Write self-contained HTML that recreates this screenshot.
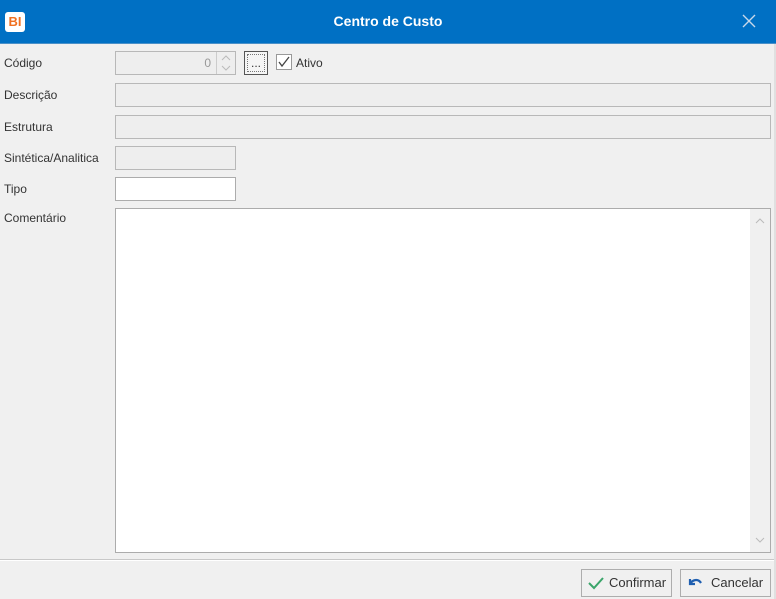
<!DOCTYPE html>
<html><head><meta charset="utf-8"><style>
*{box-sizing:border-box;margin:0;padding:0}
body{width:776px;height:599px;background:#f0f0f0;font-family:"Liberation Sans",sans-serif;font-size:12px;color:#333;position:relative;overflow:hidden}
.title{position:absolute;left:0;top:0;width:776px;height:44px;background:#0070c4;border-bottom:1px solid #4a90c8}
.title .t{position:absolute;left:0;width:776px;top:13px;text-align:center;color:#fff;font-weight:bold;font-size:14px}
.logo{position:absolute;left:5px;top:12px;width:20px;height:20px;background:#fff;border-radius:3px;color:#f07020;font-weight:bold;font-size:13px;text-align:center;line-height:20px}
.x{position:absolute;left:740px;top:12px}
.lbl{position:absolute;left:4px;font-size:12px;color:#333}
.in{position:absolute;border:1px solid #b8b8b8;background:#eeeeee}
.w{background:#fff;border-color:#acacac}
.right{position:absolute;right:0;top:44px;width:2px;height:555px;background:#e0e0e0}
.btn{position:absolute;top:569px;height:28px;border:1px solid #adadad;background:#f0f0f0;font-size:13px;color:#333;line-height:26px}
</style></head><body>
<div class="title"><div class="logo">BI</div><div class="t">Centro de Custo</div>
<svg class="x" width="18" height="18" viewBox="0 0 18 18"><path d="M3 3L15 15M15 3L3 15" stroke="#c8d8ea" stroke-width="1.4"/></svg></div>
<div class="lbl" style="top:56px">Código</div>
<div class="in" style="left:115px;top:51px;width:121px;height:24px"><span style="position:absolute;right:24px;top:4px;color:#999">0</span>
<div style="position:absolute;right:0;top:0;width:19px;height:22px;border-left:1px solid #ccc"><svg width="18" height="22"><path d="M5 8l4-4 4 4M5 14l4 4 4-4" stroke="#bbb" fill="none"/></svg></div></div>
<div style="position:absolute;left:244px;top:51px;width:24px;height:24px;border:1px solid #555;background:#f5f5f5;font-size:12px;text-align:center;line-height:22px"><div style="position:absolute;left:2px;top:2px;right:2px;bottom:2px;border:1px dotted #777"></div>...</div>
<div style="position:absolute;left:276px;top:54px;width:16px;height:16px;border:1px solid #999;background:#fff"><svg width="14" height="14"><path d="M2 7l3 4 7-9" stroke="#444" fill="none" stroke-width="1.3"/></svg></div>
<div class="lbl" style="left:296px;top:56px">Ativo</div>
<div class="lbl" style="top:88px">Descrição</div>
<div class="in" style="left:115px;top:83px;width:656px;height:24px"></div>
<div class="lbl" style="top:120px">Estrutura</div>
<div class="in" style="left:115px;top:115px;width:656px;height:24px"></div>
<div class="lbl" style="top:151px">Sintética/Analitica</div>
<div class="in" style="left:115px;top:146px;width:121px;height:24px"></div>
<div class="lbl" style="top:182px">Tipo</div>
<div class="in w" style="left:115px;top:177px;width:121px;height:24px"></div>
<div class="lbl" style="top:211px">Comentário</div>
<div class="in w" style="left:115px;top:208px;width:656px;height:345px">
<div style="position:absolute;right:0;top:0;width:20px;height:343px;background:#f0f0f0"><svg width="20" height="343"><path d="M6 14l4-4 4 4M6 329l4 4 4-4" stroke="#bbb" fill="none"/></svg></div></div>
<div style="position:absolute;left:0;top:559px;width:776px;height:1px;background:#c8c8c8"></div>
<div style="position:absolute;left:0;top:560px;width:776px;height:1px;background:#fff"></div>
<div class="btn" style="left:581px;width:91px"><svg style="position:absolute;left:6px;top:6px" width="16" height="14"><path d="M1 7l5 5 9-10" stroke="#3aa56a" stroke-width="2" fill="none"/></svg><span style="position:absolute;left:27px">Confirmar</span></div>
<div class="btn" style="left:680px;width:91px"><svg style="position:absolute;left:5px;top:6px" width="18" height="14"><path d="M4 3v5h5M4 8c2-4 8-6 11-1" stroke="#1f5fb0" stroke-width="2.2" fill="none"/></svg><span style="position:absolute;left:30px">Cancelar</span></div>
<div class="right"></div>
</body></html>
